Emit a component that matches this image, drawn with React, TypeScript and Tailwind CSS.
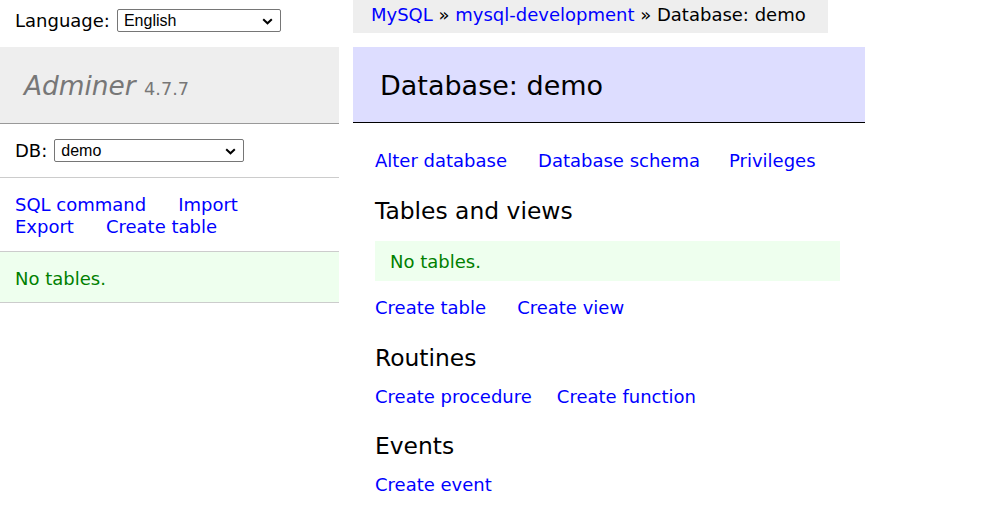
const Chevron = () => (
  <svg width="11" height="7" viewBox="0 0 11 7" className="absolute right-[7px] top-[8px]">
    <path d="M1.2 1.3 L5.5 5.3 L9.8 1.3" fill="none" stroke="#000" strokeWidth="2" />
  </svg>
);

const FakeSelect = ({ value, width }: { value: string; width: string }) => (
  <span
    className={`relative inline-block h-[23px] ${width} rounded-[2px] border border-[#767676] bg-white pl-[6px] align-middle font-['Liberation_Sans',Arial,sans-serif] text-[16px] leading-[21px] text-black`}
  >
    {value}
    <Chevron />
  </span>
);

const Link = ({ children }: { children: string }) => (
  <a href="#" className="whitespace-nowrap text-[#0000ff]">
    {children}
  </a>
);

const Menu = () => (
  <div className="w-[339px] shrink-0">
    <div className="flex h-[47px] items-start pl-[15px] pt-[9px]">
      <span className="mr-[7px] leading-[23px]">Language:</span>
      <FakeSelect value="English" width="w-[164px]" />
    </div>

    <h1 className="flex h-[77px] items-center border-b border-[#999] bg-[#eeeeee] pl-[24px] pt-[4px] text-[26.4px] italic text-[#777]">
      <span className="leading-[33px]">
        Adminer <span className="text-[17.7px] not-italic">4.7.7</span>
      </span>
    </h1>

    <div className="flex h-[54px] items-center border-b border-[#ccc] pl-[15px]">
      <span className="mr-[7px] leading-[25px]">DB:</span>
      <FakeSelect value="demo" width="w-[190px]" />
    </div>

    <div className="border-b border-[#ccc] pb-[13px] pl-[15px] pt-[16px]">
      <div className="flex gap-[32px]">
        <Link>SQL command</Link>
        <Link>Import</Link>
      </div>
      <div className="flex gap-[32px]">
        <Link>Export</Link>
        <Link>Create table</Link>
      </div>
    </div>

    <div className="border-b border-[#ccc] bg-[#eeffee] pb-[12px] pl-[15px] pt-[16px] text-[#008000]">
      No tables.
    </div>
  </div>
);

const Content = () => (
  <div className="ml-[14px] w-[512px]">
    <div className="inline-block h-[33px] bg-[#eeeeee] pl-[18px] pr-[22px] leading-[30px]">
      <Link>MySQL</Link> » <Link>mysql-development</Link> » Database: demo
    </div>

    <h2 className="mt-[14px] border-b border-black bg-[#ddddff] pb-[20px] pl-[27px] pt-[22px] text-[27px] leading-[33px] text-black">
      Database: demo
    </h2>

    <div className="pl-[22px]">
      <div className="mt-[27px] flex">
        <Link>Alter database</Link>
        <span className="ml-[31px]">
          <Link>Database schema</Link>
        </span>
        <span className="ml-[29px]">
          <Link>Privileges</Link>
        </span>
      </div>

      <h3 className="mt-[25px] text-[23.4px] leading-[29px]">Tables and views</h3>
      <div className="mt-[15px] w-[465px] bg-[#eeffee] px-[15px] pb-[8px] pt-[10px] text-[#008000]">
        No tables.
      </div>
      <div className="mt-[16px] flex gap-[31px]">
        <Link>Create table</Link>
        <Link>Create view</Link>
      </div>

      <h3 className="mt-[25px] text-[23.4px] leading-[29px]">Routines</h3>
      <div className="mt-[13px] flex gap-[25px]">
        <Link>Create procedure</Link>
        <Link>Create function</Link>
      </div>

      <h3 className="mt-[24px] text-[23.4px] leading-[29px]">Events</h3>
      <div className="mt-[13px] flex gap-[32px]">
        <Link>Create event</Link>
      </div>
    </div>
  </div>
);

export default function App() {
  return (
    <div className="flex h-[528px] w-[987px] bg-white font-['DejaVu_Sans',Verdana,sans-serif] text-[18px] leading-[22px] text-black">
      <Menu />
      <Content />
    </div>
  );
}
